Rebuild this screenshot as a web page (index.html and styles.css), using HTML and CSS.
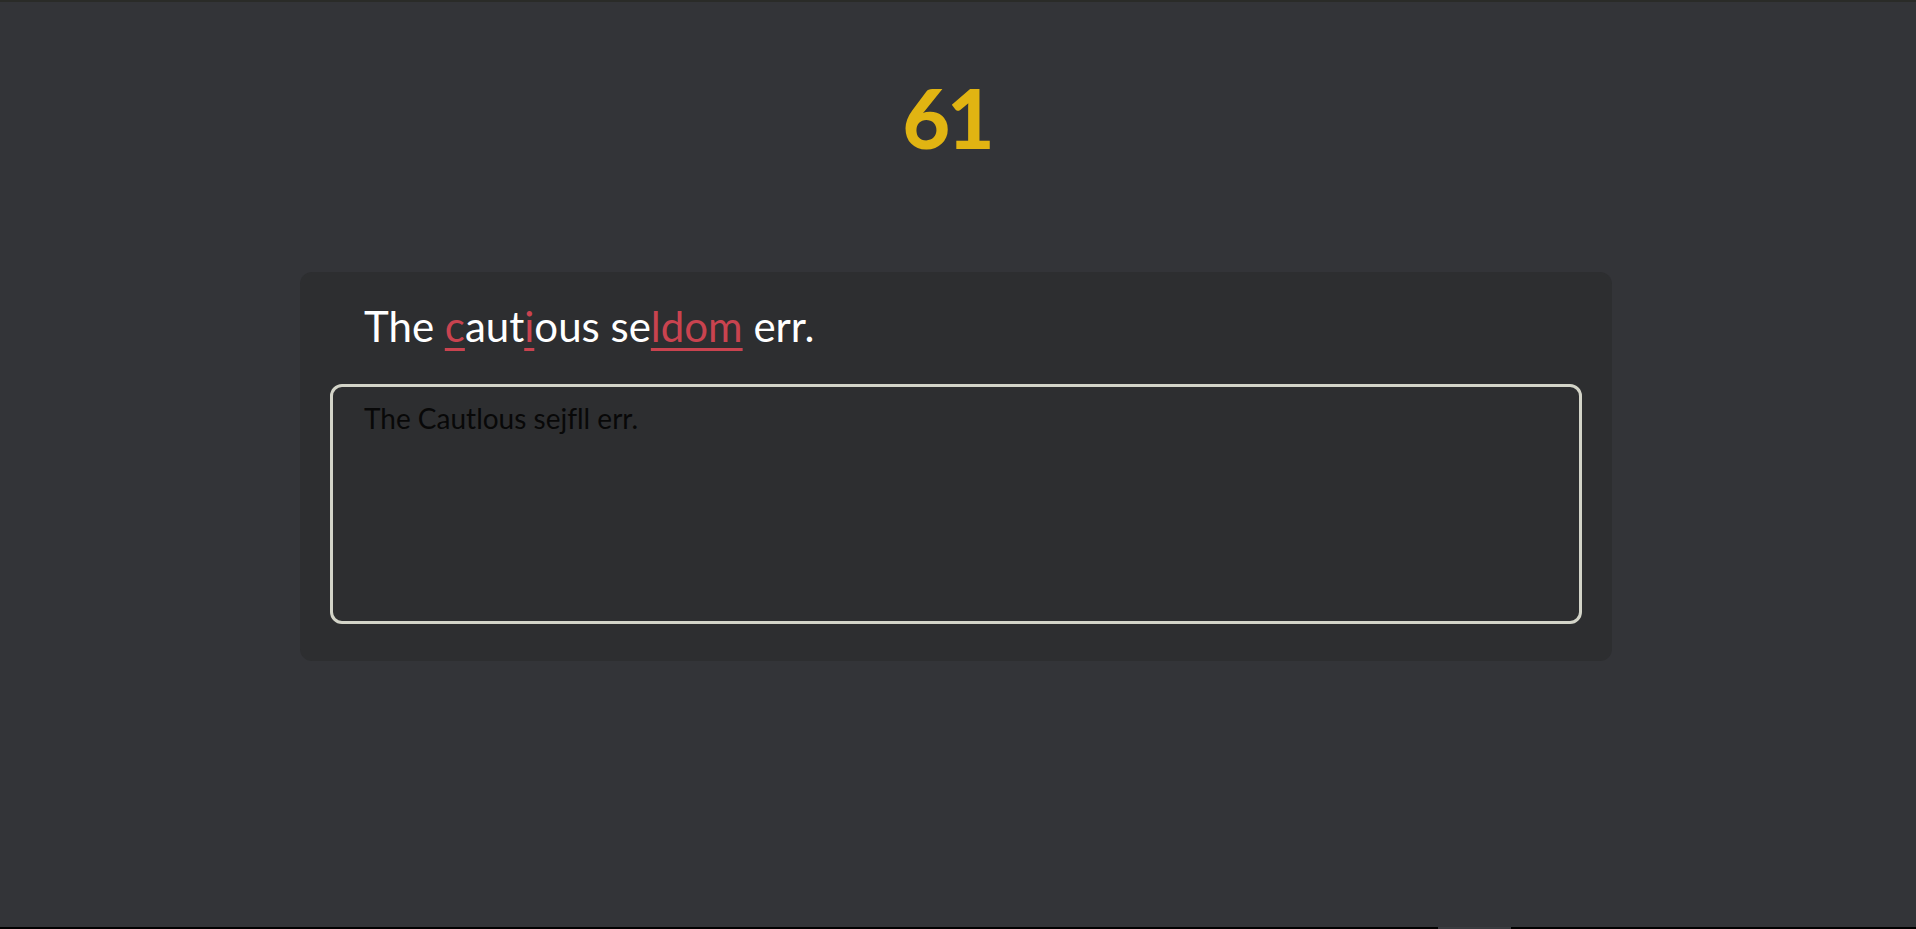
FILE: index.html
```html
<!DOCTYPE html>
<html lang="en">
<head>
<meta charset="utf-8">
<title>Typing test</title>
<link rel="stylesheet" href="styles.css">
</head>
<body>
<div class="page">
  <header class="score">61</header>
  <main class="card">
    <p class="prompt">The <span class="err">c</span>aut<span class="err">i</span>ous se<span class="err">ldom</span> err.</p>
    <div class="answer">The Cautlous sejfll err.</div>
  </main>
</div>
<div class="bottom-bar"><div class="thumb"></div></div>
</body>
</html>
```
FILE: styles.css
```css
html, body {
  margin: 0;
  padding: 0;
  height: 100%;
}
body {
  background: #333438;
  border-top: 2px solid #2a2b28;
  box-sizing: border-box;
  font-family: Lato, "Open Sans", sans-serif;
  font-variant-ligatures: none;
  display: flex;
  flex-direction: column;
  overflow: hidden;
}
.page {
  flex: 1;
  display: flex;
  flex-direction: column;
  align-items: center;
}
.score {
  color: #e1b412;
  font-family: Lato, sans-serif;
  font-weight: 900;
  font-size: 82px;
  line-height: 1;
  letter-spacing: -3px;
  padding-top: 74px;
  height: 270px;
  box-sizing: border-box;
  text-align: center;
  margin-right: 22px;
}
.card {
  width: 1312px;
  box-sizing: border-box;
  background: #2d2e30;
  border-radius: 12px;
  padding: 28px 30px 37px;
  margin-right: 4px;
}
.prompt {
  margin: 0;
  padding-left: 34px;
  color: #ffffff;
  font-size: 42px;
  line-height: 52px;
  height: 84px;
}
.err {
  color: #c9434f;
  text-decoration: underline;
  text-decoration-thickness: 3px;
  text-underline-offset: 6px;
}
.answer {
  height: 240px;
  box-sizing: border-box;
  border: 3px solid #d3d4c8;
  border-radius: 12px;
  padding: 15px 31px;
  color: #080808;
  font-size: 28px;
  line-height: 32px;
}
.bottom-bar {
  height: 2px;
  background: #000;
  display: flex;
  padding-left: 1438px;
}
.thumb {
  width: 73px;
  background: #3a3b3f;
}
```
